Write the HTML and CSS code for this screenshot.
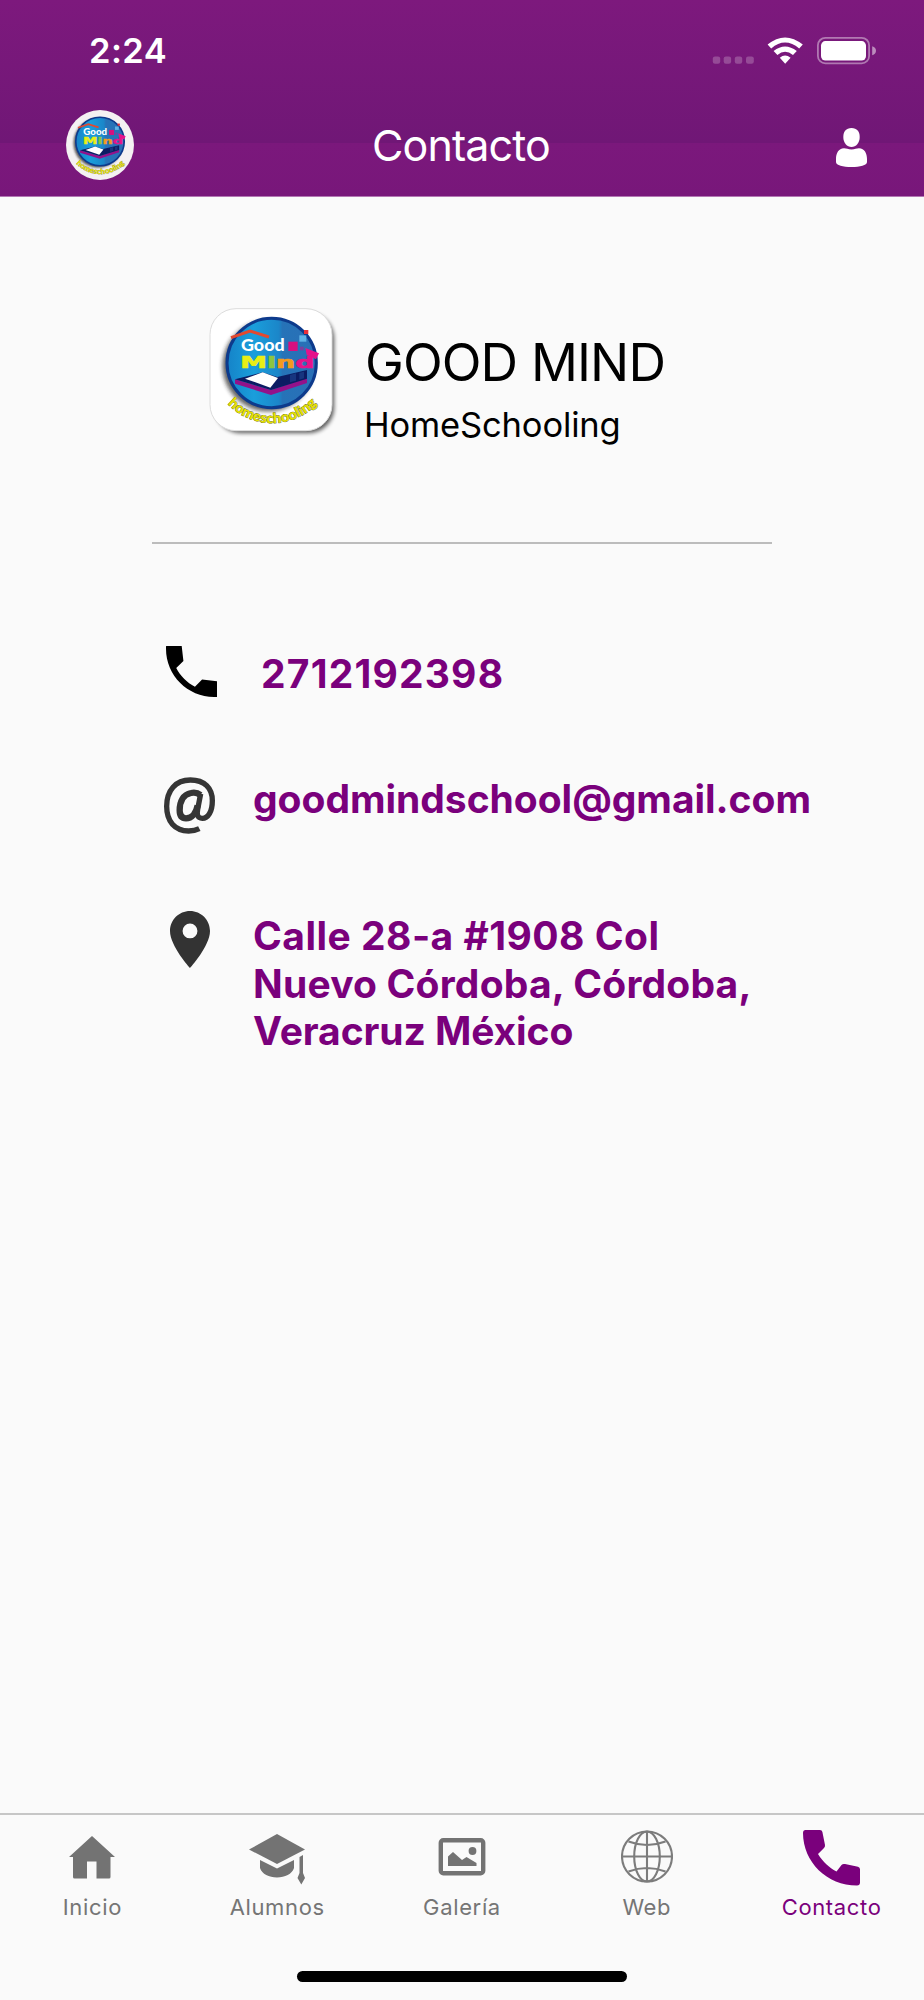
FILE: index.html
```
<!DOCTYPE html>
<html lang="es">
<head>
  <meta charset="UTF-8">
  <meta name="viewport" content="width=device-width, initial-scale=1.0">
  <title>Contacto</title>
  <link rel="stylesheet" href="styles.css">
</head>
<body>

  <header class="header">
    <div class="status-bar">
      <span class="time">2:24</span>
      <svg class="status-icons" width="166" height="30" viewBox="711 35.6 166 30" fill="#fff">
        <g opacity="0.22">
          <rect x="712.8" y="56" width="7.4" height="7.4" rx="2.2"/>
          <rect x="723.7" y="56" width="7.4" height="7.4" rx="2.2"/>
          <rect x="734.8" y="56" width="7.4" height="7.4" rx="2.2"/>
          <rect x="746" y="56" width="7.8" height="7.4" rx="2.2"/>
        </g>
        <path d="M767.6 44.2 Q785 29.8 802.8 44.2 L799.2 48 Q785 36.2 771.2 48 Z"/>
        <path d="M773.6 50.6 Q785 41.4 796.8 50.6 L793 54.6 Q785 48 777.4 54.6 Z"/>
        <path d="M779.8 57.3 Q785 52.8 790.6 57.3 L785.2 63.3 Z"/>
        <rect x="817.9" y="37.4" width="51.2" height="25.6" rx="7.5" fill="none" stroke="#fff" stroke-opacity="0.42" stroke-width="1.8"/>
        <rect x="821" y="40.7" width="45" height="19.4" rx="4.4"/>
        <path d="M872.2 45.8 Q876 47 876 50.3 Q876 53.6 872.2 54.8 Z" opacity="0.5"/>
      </svg>
    </div>

    <div class="navbar">
      <svg class="nav-logo" width="68" height="70" viewBox="57 45 376 387">
        <ellipse cx="245" cy="238.500" rx="188" ry="193" fill="#f4f1f2"/>
        <use href="#logo"/>
      </svg>
      <h1 class="nav-title">Contacto</h1>
      <svg class="user-icon" width="31" height="40" viewBox="0 0 31 40" fill="#fff">
        <path d="M15.500 0 C21 0 23.700 3.500 23.700 9 C23.700 15 20 19 15.500 19 C11 19 7.300 15 7.300 9 C7.300 3.500 10 0 15.500 0 Z"/>
        <path d="M8 20.300 C10.500 20.300 12 21.500 15.500 21.500 C19 21.500 20.500 20.300 23 20.300 C28.500 20.300 31 25.500 31 31 L31 34 C31 37.500 24 39 15.500 39 C7 39 0 37.500 0 34 L0 31 C0 25.500 2.500 20.300 8 20.300 Z"/>
      </svg>
    </div>
  </header>

  <main class="content">
    <section class="brand">
      <svg class="brand-logo" width="170" height="160" viewBox="0 0 510 480">
        <defs>
          <linearGradient id="sky" x1="0" x2="1" y1="0" y2="0">
            <stop offset="0" stop-color="#1583c8"/>
            <stop offset="0.3" stop-color="#1a9edb"/>
            <stop offset="0.58" stop-color="#1b86c9"/>
            <stop offset="0.62" stop-color="#2673b8"/>
            <stop offset="1" stop-color="#2a6fb6"/>
          </linearGradient>
          <filter id="blur" x="-20%" y="-20%" width="140%" height="140%">
            <feGaussianBlur stdDeviation="7"/>
          </filter>
          <g id="logo">
            <circle cx="234" cy="228" r="136" fill="#222" opacity="0.7" filter="url(#blur)"/>
            <circle cx="245" cy="219" r="134" fill="url(#sky)" stroke="#0d3a8c" stroke-width="9"/>
            <path d="M123 143 L180 123 L237 141" fill="none" stroke="#e2492f" stroke-width="9"/>
            <text class="logo-good" x="153" y="184" textLength="131" lengthAdjust="spacingAndGlyphs">Good</text>
            <rect x="295" y="155" width="28" height="28" fill="#d6107f"/>
            <rect x="328" y="136" width="21" height="19" fill="#5fb2e6"/>
            <rect x="342" y="120" width="13" height="12" fill="#e8303a"/>
            <rect x="330" y="170" width="11" height="11" fill="#7a3fa0"/>
            <text class="logo-mind" x="151" y="234" textLength="222" lengthAdjust="spacingAndGlyphs"><tspan fill="#e9ee15" stroke="#e9ee15">M</tspan><tspan fill="#8cc63f" stroke="#8cc63f">i</tspan><tspan fill="#f39a1e" stroke="#f39a1e">n</tspan><tspan fill="#e5128b" stroke="#e5128b">d</tspan></text>
            <path d="M346 174 L387 190 L378 208 L350 194 Z" fill="#e5128b"/>
            <path d="M135 268 L243 300 L351 265 L351 279 L243 315 L135 281 Z" fill="#93128a"/>
            <path d="M135 268 L218 247 L262 261 L351 240 L351 266 L243 300 Z" fill="#0b1c63"/>
            <path d="M165 266 L218 247 L264 264 L241 293 Z" fill="#fff"/>
            <path d="M300 255 L318 250 L318 272 L300 277 Z M328 248 L342 245 L342 265 L328 269 Z" fill="#17357f"/>
            <path id="curve" d="M113 342 A185 185 0 0 0 388 334" fill="none"/>
            <text class="logo-home"><textPath href="#curve" textLength="300" lengthAdjust="spacingAndGlyphs">homeschooling</textPath></text>
          </g>
        </defs>
        <rect x="76" y="70" width="356" height="359" rx="76" fill="#000" opacity="0.65" filter="url(#blur)"/>
        <rect x="60" y="56" width="366" height="366" rx="78" fill="#fff" stroke="#dcdcdc" stroke-width="3"/>
        <use href="#logo"/>
      </svg>
      <div class="brand-text">
        <h2>GOOD MIND</h2>
        <p>HomeSchooling</p>
      </div>
    </section>

    <hr class="divider">

    <section class="contact-list">
      <div class="contact-row">
        <svg class="contact-icon" width="51" height="51" viewBox="3 3 18 18" fill="#000">
          <path d="M21 15.460l-5.270-.610-2.520 2.520c-2.830-1.440-5.150-3.750-6.590-6.590l2.530-2.530L8.540 3H3.030C2.450 13.180 10.820 21.550 21 20.970v-5.510z"/>
        </svg>
        <span class="phone">2712192398</span>
      </div>
      <div class="contact-row">
        <svg class="contact-icon at-icon" width="52" height="58" viewBox="73 741 156 174" fill="none" stroke="#353535" stroke-width="16">
          <path d="M179 896 C169 901 158 903 147 903 C105 903 81 874 81 829 C81 781 108 750 152 750 C195 750 218 775 218 812 C218 845 205 865 188 865 C173 865 171 854 174 838 L183 791"/>
          <path d="M182 795 C175 789 164 787 154 789 C131 793 120 814 120 841 C120 857 127 865 139 865 C156 865 169 850 174 826" stroke-width="19"/>
        </svg>
        <span class="email">goodmindschool@gmail.com</span>
      </div>
      <div class="contact-row">
        <svg class="contact-icon pin-icon" width="40" height="57" viewBox="5 2 14 20" preserveAspectRatio="none" fill="#333">
          <path d="M12 2C8.130 2 5 5.130 5 9c0 5.250 7 13 7 13s7-7.750 7-13c0-3.870-3.130-7-7-7zm0 9.600a2.600 2.600 0 1 1 0-5.200 2.600 2.600 0 0 1 0 5.200z"/>
        </svg>
        <address class="address">
          <span class="line-1">Calle 28-a #1908 Col</span><br>
          <span class="line-2">Nuevo Córdoba, Córdoba,</span><br>
          <span class="line-3">Veracruz México</span>
        </address>
      </div>
    </section>
  </main>

  <footer class="footer">
    <nav class="tabs">
      <a class="tab">
        <svg width="46" height="56" viewBox="0 0 46 56" fill="#737373">
          <path d="M23 6 L46 27 H41.500 V47 Q41.500 48.500 40 48.500 H27.500 V31.500 H18 V48.500 H5.500 Q4 48.500 4 47 V27 H0 Z"/>
        </svg>
        <span>Inicio</span>
      </a>
      <a class="tab">
        <svg width="56" height="56" viewBox="0 0 56 56" fill="#737373">
          <path d="M28 4 L56 19.500 L28 34 L0 19.500 Z"/>
          <path d="M11 30 L28 38.500 L45 30 V38 C43 44 36 47.500 28 47.500 C20 47.500 13 44 11 38 Z"/>
          <path d="M50.500 27 L54 25 V43 L56 48 L52.300 54.500 L48.500 48 L50.500 43 Z"/>
        </svg>
        <span>Alumnos</span>
      </a>
      <a class="tab">
        <svg width="48" height="56" viewBox="0 0 48 56" fill="#737373">
          <rect x="2.800" y="10.200" width="42.400" height="33" rx="2.500" fill="none" stroke="#737373" stroke-width="4.400"/>
          <path d="M10 36 V26.500 L15 22 L24 30 L28.500 27 L38.500 33 V36 Z"/>
          <circle cx="34.500" cy="21" r="3.900"/>
        </svg>
        <span>Galería</span>
      </a>
      <a class="tab">
        <svg width="52" height="56" viewBox="0 0 52 56" fill="none" stroke="#7c7c7c" stroke-width="2.100">
          <circle cx="26" cy="26.500" r="25"/>
          <ellipse cx="26" cy="26.500" rx="12.800" ry="25"/>
          <path d="M26 1.500 V51.500 M1 26.500 H51 M7.500 11.500 Q26 18.500 44.500 11.500 M7.500 41.500 Q26 34.500 44.500 41.500"/>
        </svg>
        <span>Web</span>
      </a>
      <a class="tab active">
        <svg width="57" height="56" viewBox="0 0 57 56" fill="#7a007c">
          <path d="M2.500 0 H17 Q19 0 19.400 2 L22 15 Q22.200 17 21 18 L15 24 C20 32 26 37.500 33.500 41.500 L38.500 35 Q39.800 33.500 42 34 L55 36.800 Q57 37.300 57 39.300 V52.500 Q57 55.500 54 55.500 C24 55.500 0 32 0 3 Q0 0 2.500 0 Z"/>
        </svg>
        <span>Contacto</span>
      </a>
    </nav>
    <div class="home-indicator"></div>
  </footer>

</body>
</html>
```
FILE: styles.css
```
* {
  margin: 0;
  padding: 0;
  box-sizing: border-box;
}

body {
  width: 924px;
  height: 2000px;
  display: flex;
  flex-direction: column;
  background-color: #fafafa;
  font-family: Inter, sans-serif;
  overflow: hidden;
}

svg {
  display: block;
  flex-shrink: 0;
}

/* header */
.header {
  height: 197px;
  background: linear-gradient(#7d197d 0, #701776 143px, #7b187c 143px, #78177a 196px, #b277b3 196px);
  color: white;
}

.status-bar {
  height: 101px;
  display: flex;
  align-items: center;
  justify-content: space-between;
  padding: 0 47px 0 89px;
}

.time {
  font-size: 34.5px;
  font-weight: 600;
  letter-spacing: 0.4px;
}

.navbar {
  height: 87px;
  display: grid;
  grid-template-columns: 1fr auto 1fr;
  align-items: center;
  padding: 0 57px 0 66px;
}

.nav-title {
  font-size: 43px;
  font-weight: 400;
  letter-spacing: -0.88px;
  margin-right: 11px;
}

.user-icon {
  justify-self: end;
  margin-top: 6px;
}

/* content */
.content {
  flex: 1;
}

.brand {
  display: flex;
  padding: 93px 0 0 190px;
}

.brand-text {
  padding: 43px 0 0 4px;
}

.brand-text h2 {
  font-size: 52px;
  font-weight: 400;
  line-height: 60px;
  letter-spacing: -0.9px;
  margin-left: 1px;
}

.brand-text p {
  font-size: 34.5px;
  line-height: 42px;
  letter-spacing: -0.15px;
  margin-top: 11px;
}

.logo-good {
  font-family: Lato, sans-serif;
  font-size: 48px;
  font-weight: 900;
  fill: white;
}

.logo-mind {
  font-family: "DejaVu Sans", sans-serif;
  font-size: 48px;
  font-weight: 700;
  stroke-width: 2px;
}

.logo-home {
  font-family: Lato, sans-serif;
  font-size: 42px;
  font-weight: 900;
  fill: #e6e200;
  stroke: #55550a;
  stroke-width: 2px;
  paint-order: stroke;
}

.divider {
  width: 620px;
  height: 2px;
  border: none;
  background-color: #bcbcbc;
  margin: 92px auto 0;
}

.contact-list {
  padding: 102px 0 0 164px;
  color: #7a007c;
  font-size: 39px;
  font-weight: 700;
  line-height: 47.5px;
}

.contact-row {
  display: flex;
  align-items: flex-start;
  height: 129px;
  padding-left: 2px;
}

.contact-row + .contact-row {
  height: 136px;
}

.contact-icon {
  margin-right: 44px;
}

.at-icon {
  margin: 2px 37px 0 -2px;
}

.pin-icon {
  margin: 0 43px 0 4px;
}

.phone {
  letter-spacing: 1.2px;
  margin-top: 4px;
}

.email {
  letter-spacing: -0.03px;
}

.address {
  font-style: normal;
  white-space: nowrap;
  margin-top: 1px;
}

.line-1 {
  letter-spacing: 0.48px;
}

.line-2 {
  letter-spacing: 0.2px;
}

.line-3 {
  letter-spacing: -0.08px;
}

/* tab bar */
.footer {
  height: 187px;
  border-top: 2px solid #c6c6c6;
}

.tabs {
  display: grid;
  grid-template-columns: repeat(5, 1fr);
  height: 156px;
  padding: 15px 0 0;
}

.tab {
  display: flex;
  flex-direction: column;
  align-items: center;
  color: #757575;
  font-size: 22px;
  line-height: 28px;
  letter-spacing: 0.65px;
}

.tab span {
  margin-top: 7px;
}

.tab.active {
  color: #7a007c;
}

.home-indicator {
  width: 330px;
  height: 11px;
  border-radius: 6px;
  background-color: black;
  margin: 0 auto;
}
```
